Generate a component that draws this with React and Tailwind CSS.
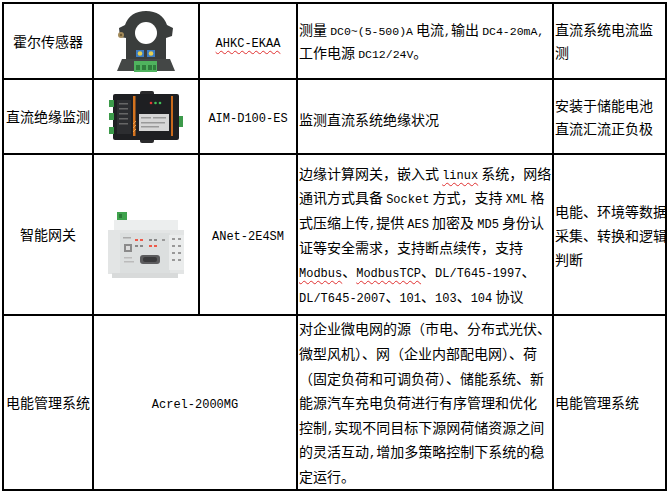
const L = ({ children, wavy, sm }) => (
  <span
    className={[
      "font-['Liberation_Mono','Noto_Sans_CJK_SC',monospace] leading-none",
      sm ? "text-[11.5px]" : "text-[12px]",
      wavy ? "underline decoration-wavy decoration-[#e03030] decoration-1 underline-offset-[3px]" : "",
    ].join(" ")}
  >
    {children}
  </span>
);

const HallSensor = () => (
  <svg width="60" height="66" viewBox="0 0 60 66" className="mx-auto block">
    <path d="M3 20 L9 17 Q14 3 30 3 Q46 3 51 17 L57 20 L56 28 L50 30 L50 52 L10 52 L10 30 L4 29 Z" fill="#3a3d3c" />
    <path d="M6 51 L54 51 L59 63 L1 63 Z" fill="#444746" />
    <circle cx="30" cy="25" r="11" fill="#fff" />
    <circle cx="5" cy="27" r="3" fill="#a48c5c" />
    <circle cx="5" cy="27" r="1.2" fill="#6d5a36" />
    <rect x="20" y="42" width="8" height="7" fill="#3d7dc2" />
    <rect x="31" y="42" width="8" height="7" fill="#3d7dc2" />
    <circle cx="24" cy="45.5" r="2.3" fill="#e6cf52" />
    <circle cx="35" cy="45.5" r="2.3" fill="#e6cf52" />
    <rect x="18" y="53" width="23" height="11" fill="#4fb35e" />
    <rect x="20" y="57" width="4" height="5" fill="#2f7d3c" />
    <rect x="26" y="57" width="4" height="5" fill="#2f7d3c" />
    <rect x="32" y="57" width="4" height="5" fill="#2f7d3c" />
    <rect x="37" y="57" width="3" height="5" fill="#2f7d3c" />
  </svg>
);

const InsulationMonitor = () => (
  <svg width="78" height="54" viewBox="0 0 78 54" className="mx-auto block">
    <rect x="33" y="1" width="14" height="5" rx="2" fill="#2a2a2c" />
    <rect x="33" y="48" width="14" height="5" rx="2" fill="#2a2a2c" />
    <rect x="6" y="4" width="66" height="46" rx="2" fill="#1e1f22" />
    <rect x="2" y="10" width="5" height="7" fill="#3c9a4a" />
    <rect x="2" y="23" width="5" height="7" fill="#3c9a4a" />
    <rect x="2" y="37" width="5" height="7" fill="#3c9a4a" />
    <rect x="72" y="26" width="4" height="11" fill="#3c9a4a" />
    <rect x="10" y="10" width="14" height="34" fill="#2c2d30" />
    <rect x="12" y="13" width="9" height="1.5" fill="#666" />
    <rect x="12" y="18" width="9" height="1.5" fill="#666" />
    <rect x="12" y="23" width="9" height="1.5" fill="#666" />
    <rect x="12" y="28" width="9" height="1.5" fill="#666" />
    <rect x="12" y="33" width="9" height="1.5" fill="#666" />
    <rect x="26" y="6" width="2.5" height="40" fill="#d4731e" />
    <path d="M26 34 L29 31 M26 38 L29 35 M26 42 L29 39" stroke="#e8a050" strokeWidth="1" />
    <rect x="64" y="6" width="2" height="40" fill="#c96a1c" />
    <rect x="32" y="24" width="30" height="17" fill="#d6d6d6" />
    <rect x="34" y="27" width="10" height="1.5" fill="#999" />
    <rect x="46" y="27" width="13" height="1.5" fill="#999" />
    <rect x="34" y="32" width="24" height="1.5" fill="#999" />
    <rect x="34" y="36" width="18" height="1.5" fill="#999" />
    <circle cx="44" cy="13" r="1.3" fill="#e53935" />
    <circle cx="48.5" cy="13" r="1.3" fill="#43c05a" />
    <circle cx="53" cy="13" r="1.3" fill="#43c05a" />
  </svg>
);

const Gateway = () => (
  <svg width="80" height="68" viewBox="0 0 80 68" className="mx-auto block">
    <rect x="11" y="1" width="10" height="9" fill="#3fa34d" />
    <rect x="13" y="3" width="3" height="4" fill="#2b7a37" />
    <rect x="8" y="9" width="64" height="12" fill="#eceeee" />
    <rect x="2" y="19" width="76" height="44" fill="#e3e5e5" />
    <rect x="6" y="62" width="66" height="5" fill="#d8dada" />
    <rect x="14" y="22" width="50" height="40" fill="#dcdfdf" />
    <rect x="63" y="24" width="15" height="35" fill="#eaecec" />
    <rect x="29" y="28" width="3" height="2" fill="#ee5a4a" />
    <rect x="34" y="28" width="3" height="2" fill="#ee5a4a" />
    <rect x="29" y="34" width="3" height="2" fill="#888" />
    <rect x="34" y="34" width="3" height="2" fill="#888" />
    <rect x="43" y="28" width="3" height="2" fill="#888" />
    <rect x="48" y="28" width="3" height="2" fill="#888" />
    <rect x="43" y="34" width="3" height="2" fill="#ee5a4a" />
    <rect x="48" y="34" width="3" height="2" fill="#ee5a4a" />
    <rect x="56" y="28" width="3" height="2" fill="#999" />
    <rect x="66" y="27" width="3" height="2" fill="#999" />
    <rect x="72" y="27" width="3" height="2" fill="#999" />
    <rect x="66" y="34" width="3" height="2" fill="#999" />
    <rect x="72" y="34" width="3" height="2" fill="#999" />
    <rect x="66" y="41" width="3" height="2" fill="#999" />
    <rect x="72" y="41" width="3" height="2" fill="#999" />
    <rect x="66" y="48" width="3" height="2" fill="#999" />
    <rect x="72" y="48" width="3" height="2" fill="#999" />
    <rect x="17" y="26" width="8" height="1.5" fill="#aaa" />
    <rect x="18" y="33" width="8" height="8" fill="#8a8a8a" />
    <rect x="20" y="35" width="4" height="4" fill="#ddd" />
    <rect x="18" y="46" width="8" height="1.5" fill="#bbb" />
    <rect x="18" y="50" width="10" height="1.5" fill="#bbb" />
    <rect x="34" y="44" width="20" height="9" rx="3" fill="#5c5c5e" />
    <rect x="37" y="46" width="14" height="5" rx="2" fill="#3a3a3c" />
  </svg>
);

const cell = "border-2 border-black p-0 align-middle";

export default function App() {
  return (
    <div className="min-h-screen bg-white pt-[2px] pl-[2px] font-['Noto_Sans_CJK_SC',sans-serif] text-[14px] text-black">
      <table className="w-[665px] table-fixed border-collapse">
        <colgroup>
          <col className="w-[90px]" />
          <col className="w-[106px]" />
          <col className="w-[98px]" />
          <col className="w-[256px]" />
          <col className="w-[113px]" />
        </colgroup>
        <tbody>
          <tr className="h-[76px]">
            <td className={`${cell} text-center`}>霍尔传感器</td>
            <td className={cell}>
              <HallSensor />
            </td>
            <td className={`${cell} text-center`}>
              <L wavy>AHKC-EKAA</L>
            </td>
            <td className={`${cell} px-[1px] leading-[23px]`}>
              <div className="whitespace-nowrap">
                测量 <L sm>DC0~(5-500)A</L> 电流<L sm>,</L>输出 <L sm>DC4-20mA,</L>
              </div>
              <div className="whitespace-nowrap">
                工作电源 <L sm>DC12/24V</L>。
              </div>
            </td>
            <td className={`${cell} px-[1px] leading-[23px]`}>
              <div className="whitespace-nowrap">直流系统电流监</div>
              <div>测</div>
            </td>
          </tr>
          <tr className="h-[75px]">
            <td className={`${cell} text-center whitespace-nowrap`}>直流绝缘监测</td>
            <td className={cell}>
              <InsulationMonitor />
            </td>
            <td className={`${cell} text-center`}>
              <L>AIM-D100-ES</L>
            </td>
            <td className={`${cell} px-[1px] pt-[6px]`}>监测直流系统绝缘状况</td>
            <td className={`${cell} px-[1px] leading-[23px]`}>
              <div className="whitespace-nowrap">安装于储能电池</div>
              <div className="whitespace-nowrap">直流汇流正负极</div>
            </td>
          </tr>
          <tr className="h-[161px]">
            <td className={`${cell} text-center`}>智能网关</td>
            <td className={`${cell} pt-[20px]`}>
              <Gateway />
            </td>
            <td className={`${cell} text-center`}>
              <L>ANet-2E4SM</L>
            </td>
            <td className={`${cell} px-[1px] leading-[24.6px]`}>
              <div className="whitespace-nowrap">
                边缘计算网关，嵌入式 <L wavy>linux</L> 系统，网络
              </div>
              <div className="whitespace-nowrap">
                通讯方式具备 <L>Socket</L> 方式，支持 <L>XML</L> 格
              </div>
              <div className="whitespace-nowrap">
                式压缩上传<L>,</L>提供 <L>AES</L> 加密及 <L>MD5</L> 身份认
              </div>
              <div className="whitespace-nowrap">证等安全需求，支持断点续传，支持</div>
              <div className="whitespace-nowrap">
                <L wavy>Modbus</L>、<L wavy>ModbusTCP</L>、<L>DL/T645-1997</L>、
              </div>
              <div className="whitespace-nowrap">
                <L>DL/T645-2007</L>、<L>101</L>、<L>103</L>、<L>104</L> 协议
              </div>
            </td>
            <td className={`${cell} px-[1px] leading-[24px]`}>
              <div className="whitespace-nowrap">电能、环境等数据</div>
              <div className="whitespace-nowrap">采集、转换和逻辑</div>
              <div>判断</div>
            </td>
          </tr>
          <tr className="h-[175px]">
            <td className={`${cell} text-center whitespace-nowrap`}>电能管理系统</td>
            <td className={`${cell} text-center`} colSpan={2}>
              <L>Acrel-2000MG</L>
            </td>
            <td className={`${cell} px-[1px] leading-[24.6px]`}>
              <div className="whitespace-nowrap">对企业微电网的源（市电、分布式光伏、</div>
              <div className="whitespace-nowrap">微型风机）、网（企业内部配电网）、荷</div>
              <div className="whitespace-nowrap">（固定负荷和可调负荷）、储能系统、新</div>
              <div className="whitespace-nowrap">能源汽车充电负荷进行有序管理和优化</div>
              <div className="whitespace-nowrap">
                控制<L>,</L>实现不同目标下源网荷储资源之间
              </div>
              <div className="whitespace-nowrap">
                的灵活互动<L>,</L>增加多策略控制下系统的稳
              </div>
              <div className="whitespace-nowrap">定运行。</div>
            </td>
            <td className={`${cell} px-[1px] whitespace-nowrap`}>电能管理系统</td>
          </tr>
        </tbody>
      </table>
    </div>
  );
}
